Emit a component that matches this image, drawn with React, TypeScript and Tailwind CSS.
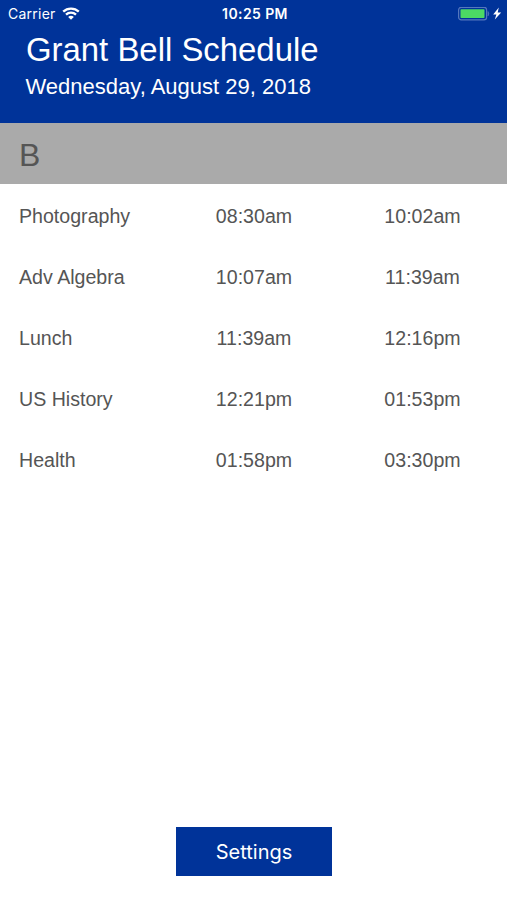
type Period = {
  name: string;
  start: string;
  end: string;
};

const periods: Period[] = [
  { name: 'Photography', start: '08:30am', end: '10:02am' },
  { name: 'Adv Algebra', start: '10:07am', end: '11:39am' },
  { name: 'Lunch', start: '11:39am', end: '12:16pm' },
  { name: 'US History', start: '12:21pm', end: '01:53pm' },
  { name: 'Health', start: '01:58pm', end: '03:30pm' },
];

const WifiIcon = () => (
  <svg viewBox="0 0 18 13" className="w-[18px] h-[13px]" fill="none" stroke="white" strokeWidth="2.3">
    <path d="M1.2 4.7a11.2 11.2 0 0 1 15.6 0" />
    <path d="M4 7.7a7.2 7.2 0 0 1 10 0" />
    <path d="M9 12.8 6.2 10a3.9 3.9 0 0 1 5.6 0Z" fill="white" stroke="none" />
  </svg>
);

const BatteryIcon = () => (
  <svg viewBox="0 0 44 14" className="w-[44px] h-[14px]">
    <rect x="0.6" y="0.3" width="28" height="12.6" rx="2.6" fill="none" stroke="#5577bd" strokeWidth="1.2" />
    <rect x="2.5" y="2.2" width="24" height="8.8" rx="0.8" fill="#4cd964" />
    <path d="M30 4.5q1.6 2.2 0 4.4Z" fill="#5577bd" stroke="#5577bd" strokeWidth="0.6" />
    <path d="M40.8 0.6 35.2 7.4h3.2L36.8 12.6 43.2 5.6h-3.5Z" fill="white" />
  </svg>
);

const StatusBar = () => (
  <div className="grid grid-cols-3 items-center h-[27px] pl-2 pr-[5px] font-['Inter',sans-serif] text-[14px] leading-none">
    <div className="flex items-center gap-[6px]">
      <span className="tracking-[0.25px]">Carrier</span>
      <WifiIcon />
    </div>
    <span className="text-center font-semibold tracking-[0.4px]">10:25 PM</span>
    <div className="flex justify-end">
      <BatteryIcon />
    </div>
  </div>
);

const App = () => {
  return (
    <div className="flex flex-col h-[900px] bg-white font-['Liberation_Sans',sans-serif] text-[#555555]">
      <header className="h-[123px] bg-[#003399] text-white">
        <StatusBar />
        <h1 className="pl-[26px] mt-1 text-[32.9px] leading-[38px] whitespace-nowrap">Grant Bell Schedule</h1>
        <p className="pl-[25.5px] mt-[5px] text-[22px] leading-[26px] whitespace-nowrap">Wednesday, August 29, 2018</p>
      </header>
      <div className="flex items-center h-[61px] pt-[3px] pl-[19px] bg-[#aaaaaa] text-[32px]">B</div>
      <main className="flex-1 pt-0.5">
        {periods.map((period) => (
          <div key={period.name} className="grid grid-cols-3 items-center h-[61px] text-[19.6px]">
            <span className="pl-[19px]">{period.name}</span>
            <span className="pl-px text-center">{period.start}</span>
            <span className="text-center">{period.end}</span>
          </div>
        ))}
      </main>
      <footer className="flex justify-center pb-6 pl-px">
        <button className="w-[156px] h-[49px] pt-px bg-[#003399] text-white text-[20px] font-['Inter',sans-serif]">Settings</button>
      </footer>
    </div>
  );
};

export default App;
